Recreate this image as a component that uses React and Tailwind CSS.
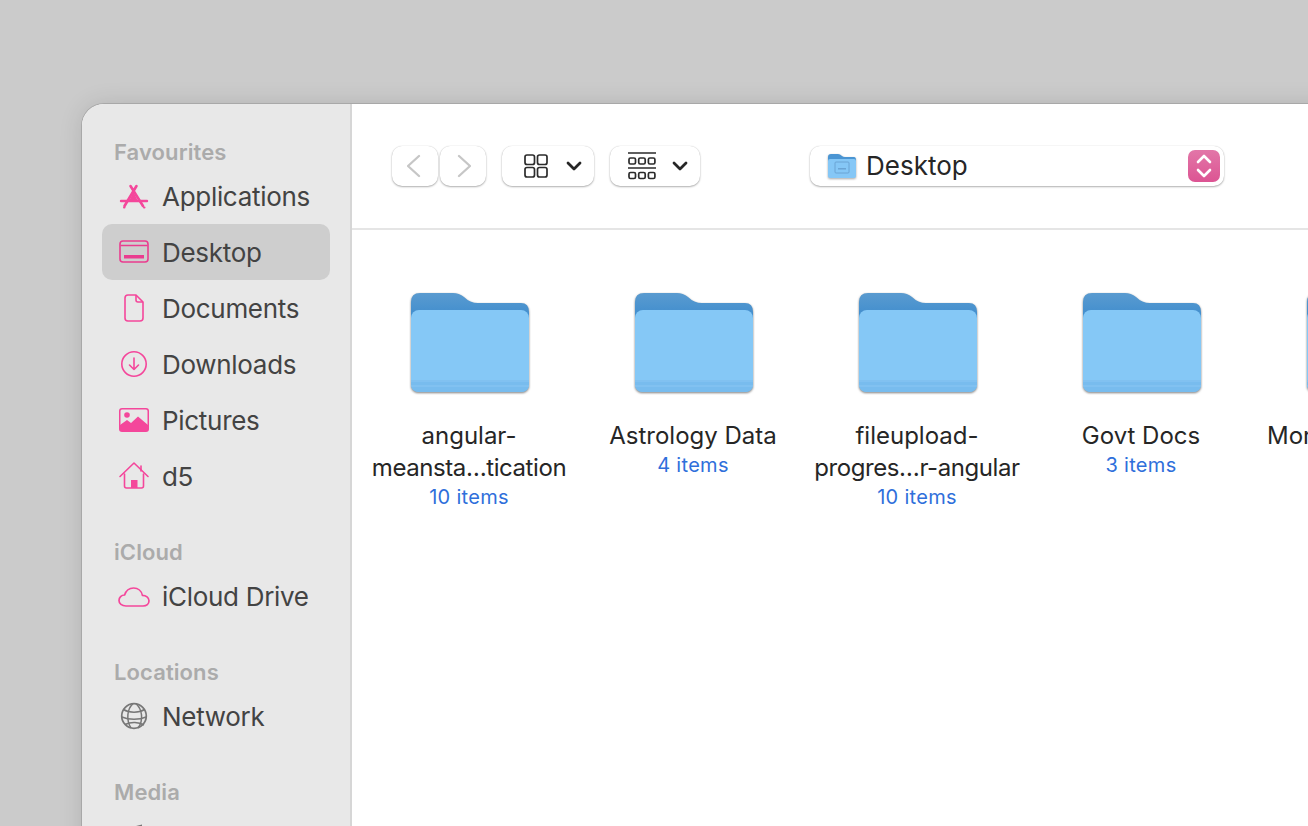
import React from 'react';

const font = { fontFamily: 'Inter, "Noto Sans", sans-serif' };

const PINK = '#f4479b';

const Applications = () => (
  <svg width="32" height="32" viewBox="0 0 32 32" fill="none" stroke={PINK} strokeLinecap="round">
    <path d="M12.5 6 L25 26 M18.5 6 L6.5 26" strokeWidth="2.6" />
    <path d="M3 21 H29" strokeWidth="2.4" />
    <path d="M15.5 12 L11 21 H20 Z" fill={PINK} stroke="none" />
    <path d="M6 27.5 H6.5 M26 27.5 H26.5" strokeWidth="2" />
  </svg>
);

const DesktopIcon = () => (
  <svg width="32" height="32" viewBox="0 0 32 32" fill="none">
    <rect x="2" y="5" width="28" height="21" rx="3" stroke="#ea3c8f" strokeWidth="1.6" />
    <path d="M2.5 9.5 H29.5" stroke="#ea3c8f" strokeWidth="1.4" />
    <rect x="6" y="19" width="20" height="3.5" fill="#ea3c8f" />
  </svg>
);

const DocumentIcon = () => (
  <svg width="32" height="32" viewBox="0 0 32 32" fill="none" stroke={PINK} strokeWidth="1.6" strokeLinejoin="round">
    <path d="M7 6 Q7 3 10 3 H18 L25 10 V26 Q25 29 22 29 H10 Q7 29 7 26 Z" />
    <path d="M18 3 V8 Q18 10 20 10 H25" />
  </svg>
);

const DownloadIcon = () => (
  <svg width="32" height="32" viewBox="0 0 32 32" fill="none" stroke={PINK} strokeWidth="1.6" strokeLinecap="round" strokeLinejoin="round">
    <circle cx="16" cy="16" r="12.2" />
    <path d="M16 10 V21.5 M11.5 17 L16 21.5 L20.5 17" />
  </svg>
);

const PicturesIcon = () => (
  <svg width="32" height="32" viewBox="0 0 32 32" fill="none">
    <rect x="1" y="4" width="30" height="24" rx="3" fill={PINK} />
    <rect x="2.5" y="5.5" width="27" height="20" rx="1.5" fill="#e8e8e8" />
    <circle cx="9" cy="11" r="2.8" fill={PINK} />
    <path d="M2 25 L2 21 L9 16 L13 19 L20 12.5 L30 21 V25 Q30 27 28 27 H4 Q2 27 2 25 Z" fill={PINK} />
  </svg>
);

const HomeIcon = () => (
  <svg width="32" height="32" viewBox="0 0 32 32" fill="none" stroke={PINK} strokeWidth="1.6" strokeLinejoin="round" strokeLinecap="round">
    <path d="M2 16.5 L16 3 L30 16.5" />
    <path d="M6.5 14 V26 Q6.5 28 8.5 28 H23.5 Q25.5 28 25.5 26 V14" />
    <path d="M23 6 V11" />
    <rect x="13" y="20" width="6.5" height="8" fill={PINK} stroke="none" />
  </svg>
);

const CloudIcon = () => (
  <svg width="32" height="32" viewBox="0 0 32 32" fill="none" stroke={PINK} strokeWidth="1.7" strokeLinejoin="round">
    <path d="M8 26 C3.8 26 1 23.6 1 20.4 C1 17.4 3.4 15 6.6 15 C8 10.6 11.6 8 15.6 8 C20 8 23.6 11 24.4 15.4 C28 15.4 31 17.6 31 20.8 C31 23.8 28.6 26 25 26 Z" />
  </svg>
);

const GlobeIcon = () => (
  <svg width="32" height="32" viewBox="0 0 32 32" fill="none" stroke="#777777" strokeWidth="1.5">
    <circle cx="16" cy="16" r="12.3" strokeWidth="1.7" />
    <path d="M15 3.8 C9 9 8 20 13 28" />
    <path d="M18 3.8 C24 9 26 20 20 28" />
    <path d="M5.5 9.5 C11 13 21 13 26.5 9.5" />
    <path d="M3.8 17 C11 20 21 20 28.2 17" />
    <path d="M7 24.5 C13 21.5 21 22 26 25" />
  </svg>
);

const DiscIcon = () => (
  <svg width="32" height="32" viewBox="0 0 32 32" fill="#777777">
    <path d="M10 8 L24 4.5 V20 H10 Z" />
  </svg>
);

const SidebarHeading = ({ children, className = '' }) => (
  <div className={`pl-[32px] h-[32px] flex items-center text-[22px] font-semibold tracking-[0.1px] text-[#ababab] ${className}`}>
    {children}
  </div>
);

const SidebarRow = ({ icon, label, active }) => (
  <div
    className={`mx-[20px] h-[56px] w-[228px] shrink-0 flex items-center gap-[12px] pl-[16px] rounded-[10px] text-[26px] tracking-[-0.3px] text-[#434343] ${
      active ? 'bg-[#cecece]' : ''
    }`}
  >
    {icon}
    <span>{label}</span>
  </div>
);

const Sidebar = () => (
  <aside className="w-[270px] shrink-0 bg-[#e8e8e8] border-r-2 border-[#d6d6d6] pt-[32px] rounded-tl-[22px] overflow-hidden">
    <SidebarHeading>Favourites</SidebarHeading>
    <SidebarRow icon={<Applications />} label="Applications" />
    <SidebarRow icon={<DesktopIcon />} label="Desktop" active />
    <SidebarRow icon={<DocumentIcon />} label="Documents" />
    <SidebarRow icon={<DownloadIcon />} label="Downloads" />
    <SidebarRow icon={<PicturesIcon />} label="Pictures" />
    <SidebarRow icon={<HomeIcon />} label="d5" />
    <SidebarHeading className="mt-[32px]">iCloud</SidebarHeading>
    <SidebarRow icon={<CloudIcon />} label="iCloud Drive" />
    <SidebarHeading className="mt-[32px]">Locations</SidebarHeading>
    <SidebarRow icon={<GlobeIcon />} label="Network" />
    <SidebarHeading className="mt-[32px]">Media</SidebarHeading>
    <SidebarRow icon={<DiscIcon />} label="" />
  </aside>
);

const btn = 'h-[40px] bg-white rounded-[10px] shadow-[0_1px_2px_rgba(0,0,0,0.3),0_0_1px_rgba(0,0,0,0.2)] flex items-center';

const Chevron = () => (
  <svg width="16" height="12" viewBox="0 0 16 12" fill="none" stroke="#262626" strokeWidth="2.8" strokeLinecap="round" strokeLinejoin="round">
    <path d="M2 3 L8 9 L14 3" />
  </svg>
);

const Toolbar = () => (
  <div className="h-[126px] shrink-0 border-b-2 border-[#e5e5e5] flex items-start pt-[42px] pl-[40px]">
    <div className={`${btn} w-[46px] justify-center`}>
      <svg width="16" height="24" viewBox="0 0 16 24" fill="none" stroke="#c6c6c6" strokeWidth="2.3" strokeLinecap="round" strokeLinejoin="round">
        <path d="M12 2 L1 12 L12 22" />
      </svg>
    </div>
    <div className={`${btn} w-[46px] ml-[2px] justify-center`}>
      <svg width="16" height="24" viewBox="0 0 16 24" fill="none" stroke="#c6c6c6" strokeWidth="2.3" strokeLinecap="round" strokeLinejoin="round">
        <path d="M4 2 L15 12 L4 22" />
      </svg>
    </div>
    <div className={`${btn} w-[92px] ml-[16px] pl-[22px] gap-[18px]`}>
      <svg width="24" height="24" viewBox="0 0 24 24" fill="none" stroke="#2b2b2b" strokeWidth="1.7">
        <rect x="1" y="1" width="9.5" height="9.5" rx="2" />
        <rect x="13.5" y="1" width="9.5" height="9.5" rx="2" />
        <rect x="1" y="13.5" width="9.5" height="9.5" rx="2" />
        <rect x="13.5" y="13.5" width="9.5" height="9.5" rx="2" />
      </svg>
      <Chevron />
    </div>
    <div className={`${btn} w-[90px] ml-[16px] pl-[18px] gap-[16px]`}>
      <svg width="28" height="28" viewBox="0 0 28 28" fill="none" stroke="#2b2b2b" strokeWidth="1.7">
        <path d="M0 1 H28 M0 16 H28" strokeWidth="1.5" />
        <rect x="1" y="6" width="6.5" height="6" rx="1.5" />
        <rect x="10.7" y="6" width="6.5" height="6" rx="1.5" />
        <rect x="20.4" y="6" width="6.5" height="6" rx="1.5" />
        <rect x="1" y="20.5" width="6.5" height="6" rx="1.5" />
        <rect x="10.7" y="20.5" width="6.5" height="6" rx="1.5" />
        <rect x="20.4" y="20.5" width="6.5" height="6" rx="1.5" />
      </svg>
      <Chevron />
    </div>
    <div className={`${btn} w-[414px] ml-[110px] pl-[17px] pr-[4px]`}>
      <svg width="30" height="28" viewBox="0 0 30 28" className="drop-shadow-[0_1px_1px_rgba(0,0,0,0.35)]">
        <path d="M1 5 Q1 2 4 2 H11 Q13 2 15 4 Q16 5 18 5 H27 Q29 5 29 8 V14 H1 Z" fill="#4a95d3" />
        <rect x="1" y="7" width="28" height="19" rx="2" fill="#85c7f6" />
        <rect x="8" y="10" width="14" height="11" rx="1" fill="none" stroke="#6aa4d4" strokeWidth="1" />
        <rect x="11" y="16" width="8" height="1.5" fill="#6aa4d4" />
      </svg>
      <span className="ml-[9px] mb-[2px] text-[26px] text-[#262626]">Desktop</span>
      <div className="ml-auto w-[32px] h-[32px] rounded-[7px] bg-gradient-to-b from-[#e276a8] to-[#dc5493] flex items-center justify-center">
        <svg width="18" height="26" viewBox="0 0 18 26" fill="none" stroke="white" strokeWidth="2.6" strokeLinecap="round" strokeLinejoin="round">
          <path d="M3 9 L9 3 L15 9 M3 17 L9 23 L15 17" />
        </svg>
      </div>
    </div>
  </div>
);

const FolderIcon = () => (
  <svg width="120" height="102" viewBox="0 0 120 102" className="drop-shadow-[0_1px_1px_rgba(0,0,0,0.5)]">
    <defs>
      <linearGradient id="folderBack" x1="0" y1="0" x2="0" y2="1">
        <stop offset="0" stopColor="#5a9bd0" />
        <stop offset="1" stopColor="#3a8acd" />
      </linearGradient>
    </defs>
    <path d="M1 10 Q1 1 10 1 H43 Q49 1 54 5 Q60 11 68 11 H111 Q119 11 119 20 V30 H1 Z" fill="url(#folderBack)" />
    <rect x="1" y="18" width="118" height="82" rx="8" fill="#85c8f6" />
    <path d="M1 88 H119 V92 Q119 100 111 100 H9 Q1 100 1 92 Z" fill="#78bcee" />
    <path d="M1 89 H119 M1 94 H119" stroke="#8ac6f3" strokeWidth="1" />
  </svg>
);

const FolderItem = ({ lines, count }) => (
  <div className="w-[224px] shrink-0 flex flex-col items-center">
    <FolderIcon />
    <div className="mt-[26px] pr-[2px] text-center text-[24px] leading-[32px] text-[#262626] whitespace-nowrap">
      {lines.map((line, i) => (
        <div key={line} className={i === 1 ? 'tracking-[-0.42px]' : ''}>{line}</div>
      ))}
    </div>
    <div className="-mt-[1px] pr-[2px] text-[20px] leading-[28px] tracking-[0.3px] text-[#2f6fdb]">{count}</div>
  </div>
);

const App = () => (
  <div style={font} className="w-[1308px] h-[826px] overflow-hidden bg-[#cbcbcb] pt-[104px] pl-[82px]">
    <div className="flex h-[800px] w-[1300px] rounded-tl-[22px] bg-white shadow-[0_0_0_1px_#a8a8a8,0_0_24px_rgba(0,0,0,0.12)]">
      <Sidebar />
      <main className="flex-1 min-w-0 flex flex-col">
        <Toolbar />
        <div className="flex pt-[62px] pl-[6px] overflow-hidden">
          <FolderItem lines={['angular-', 'meansta…tication']} count="10 items" />
          <FolderItem lines={['Astrology Data']} count="4 items" />
          <FolderItem lines={['fileupload-', 'progres…r-angular']} count="10 items" />
          <FolderItem lines={['Govt Docs']} count="3 items" />
          <FolderItem lines={['Mortgage Papers']} count="5 items" />
        </div>
      </main>
    </div>
  </div>
);

export default App;
